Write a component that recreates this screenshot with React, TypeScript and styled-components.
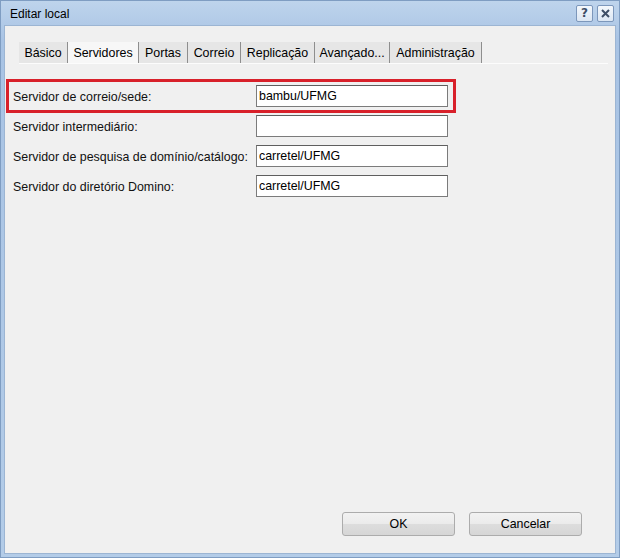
import React from 'react';
import styled, { createGlobalStyle } from 'styled-components';

const Global = createGlobalStyle`
  html, body {
    margin: 0;
    padding: 0;
    background: #ffffff;
  }
  body {
    font-family: "Liberation Sans", Arial, sans-serif;
    font-size: 12px;
    color: #000;
  }
`;

const Frame = styled.div`
  width: 620px;
  height: 558px;
  box-sizing: border-box;
  display: flex;
  flex-direction: column;
  border: 1px solid #7f9dc2;
  background: linear-gradient(#bed4ec, #a8c3e4 40px, #b3cce8);
  padding: 0 3px 3px 3px;
`;

const TitleBar = styled.div`
  height: 24px;
  display: flex;
  align-items: center;
  padding-left: 6px;
  padding-right: 2px;
`;

const Title = styled.div`
  flex: 1;
  font-size: 12px;
  color: #000;
  padding-top: 1px;
`;

const CaptionButton = styled.div<{ $gap?: number }>`
  width: 17px;
  height: 17px;
  box-sizing: border-box;
  margin-left: ${p => p.$gap ?? 0}px;
  border: 1px solid #7c97bb;
  border-radius: 2px;
  background: linear-gradient(#f4f8fc, #dbe6f3);
  display: flex;
  align-items: center;
  justify-content: center;
  font-family: "DejaVu Sans", sans-serif;
  font-weight: bold;
  font-size: 12px;
  color: #3d4e66;
`;

const Client = styled.div`
  flex: 1;
  display: flex;
  flex-direction: column;
  background: #f0f0f0;
  border: 1px solid #9cb5d3;
  min-height: 0;
`;

const TabStrip = styled.div`
  display: flex;
  margin: 16px 7px 0 14px;
  border-bottom: 1px solid #fcfcfc;
`;

const Tab = styled.div<{ $w: number; $active?: boolean }>`
  width: ${p => p.$w}px;
  height: 21px;
  box-sizing: border-box;
  display: flex;
  align-items: center;
  justify-content: center;
  background: ${p => (p.$active ? '#f7f7f7' : '#e6e6e6')};
  border-right: 1px solid #8e8e8e;
  font-size: 12.4px;
  color: #000;
  padding-top: 1px;
`;

const Form = styled.div`
  display: flex;
  flex-direction: column;
  gap: 2px;
  margin: 18px 0 0 4px;
`;

const Row = styled.div<{ $highlight?: boolean }>`
  width: 444px;
  box-sizing: border-box;
  padding: 3px 5px 3px 4px;
  display: grid;
  grid-template-columns: 243px 192px;
  align-items: center;
  outline: ${p => (p.$highlight ? '3px solid #d8202a' : 'none')};
`;

const Label = styled.span`
  font-size: 12.4px;
  color: #111;
  white-space: nowrap;
  padding-top: 2px;
`;

const Field = styled.div`
  height: 22px;
  box-sizing: border-box;
  background: #fff;
  border: 1px solid #7b7b7b;
  border-top-color: #5f5f5f;
  padding: 3px 2px 0 2px;
  font-size: 12.4px;
  color: #000;
  white-space: nowrap;
`;

const Footer = styled.div`
  margin-top: auto;
  display: flex;
  justify-content: flex-end;
  gap: 14px;
  padding: 0 33px 17px 0;
`;

const Button = styled.div`
  width: 113px;
  height: 24px;
  box-sizing: border-box;
  border: 1px solid #acacac;
  border-radius: 3px;
  background: linear-gradient(#f2f2f2 0%, #ebebeb 50%, #dddddd 51%, #d6d6d6 100%);
  display: flex;
  align-items: center;
  justify-content: center;
  font-size: 12.4px;
  color: #000;
`;

const tabs = [
  { label: 'Básico', w: 49 },
  { label: 'Servidores', w: 71, active: true },
  { label: 'Portas', w: 49 },
  { label: 'Correio', w: 53 },
  { label: 'Replicação', w: 74 },
  { label: 'Avançado...', w: 75 },
  { label: 'Administração', w: 92 },
];

const fields = [
  { label: 'Servidor de correio/sede:', value: 'bambu/UFMG', highlight: true },
  { label: 'Servidor intermediário:', value: '' },
  { label: 'Servidor de pesquisa de domínio/catálogo:', value: 'carretel/UFMG' },
  { label: 'Servidor do diretório Domino:', value: 'carretel/UFMG' },
];

const CloseIcon = () => (
  <svg width="9" height="9" viewBox="0 0 9 9">
    <path d="M1 1 L8 8 M8 1 L1 8" stroke="#3d4e66" strokeWidth="2" />
  </svg>
);

const App: React.FC = () => {
  return (
    <Frame>
      <Global />
      <TitleBar>
        <Title>Editar local</Title>
        <CaptionButton>?</CaptionButton>
        <CaptionButton $gap={4}>
          <CloseIcon />
        </CaptionButton>
      </TitleBar>
      <Client>
        <TabStrip>
          {tabs.map(t => (
            <Tab key={t.label} $w={t.w} $active={t.active}>
              {t.label}
            </Tab>
          ))}
        </TabStrip>
        <Form>
          {fields.map(f => (
            <Row key={f.label} $highlight={f.highlight}>
              <Label>{f.label}</Label>
              <Field>{f.value}</Field>
            </Row>
          ))}
        </Form>
        <Footer>
          <Button>OK</Button>
          <Button>Cancelar</Button>
        </Footer>
      </Client>
    </Frame>
  );
};

export default App;
